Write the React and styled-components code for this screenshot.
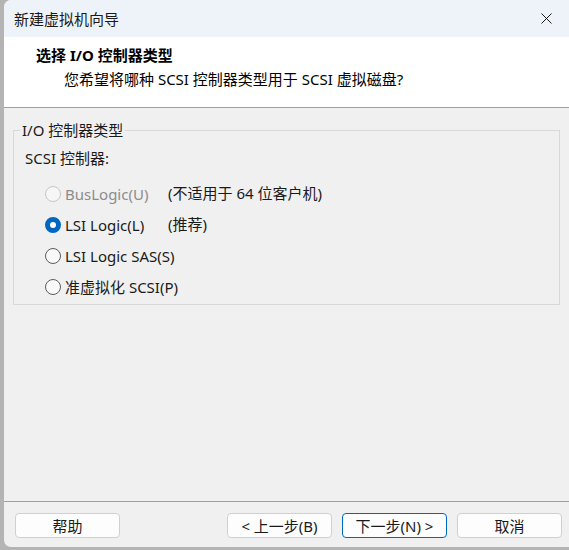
import React, { useState } from "react";
import styled, { createGlobalStyle } from "styled-components";

const GlobalStyle = createGlobalStyle`
  html, body {
    margin: 0;
    background: #b4b4b4;
  }
  * {
    box-sizing: border-box;
  }
`;

const UI_FONT = `"Noto Sans", "Noto Sans CJK SC", sans-serif`;

const Screen = styled.div`
  width: 569px;
  height: 550px;
  padding: 0 0 3px 4px;
  overflow: hidden;
`;

const Window = styled.div`
  height: 100%;
  display: flex;
  flex-direction: column;
  background: #f0f0f0;
  border-radius: 7px 0 0 7px;
  overflow: hidden;
  font-family: ${UI_FONT};
  font-size: 15px;
  color: #1a1a1a;
`;

const TitleBar = styled.div`
  height: 37px;
  flex: none;
  display: flex;
  align-items: center;
  justify-content: space-between;
  padding: 0 9px 0 10px;
  background: #eef3f9;
  font-size: 15px;
`;

const CloseButton = styled.button`
  width: 28px;
  height: 28px;
  border: 0;
  padding: 0;
  background: transparent;
  display: flex;
  align-items: center;
  justify-content: center;
`;

const Header = styled.div`
  height: 71px;
  flex: none;
  background: #ffffff;
  border-bottom: 1px solid #a0a0a0;
  padding: 8px 0 0 32px;
`;

const HeaderTitle = styled.div`
  font-weight: 700;
  font-size: 15px;
  line-height: 20px;
  color: #000;
`;

const HeaderSub = styled.div`
  margin-top: 4px;
  padding-left: 28px;
  font-size: 15px;
  line-height: 20px;
  color: #000;
`;

const Body = styled.div`
  flex: 1;
  padding: 12px 9px 0 9px;
`;

const Group = styled.fieldset`
  margin: 0;
  padding: 0 10px 2px 11px;
  border: 1px solid #d8d8d8;
  border-radius: 0;
`;

const Legend = styled.legend`
  margin-left: -5px;
  padding: 0 2px;
  line-height: 20px;
`;

const FieldLabel = styled.div`
  margin-top: 8px;
  line-height: 20px;
`;

const OptionList = styled.div`
  margin-top: 10px;
  display: grid;
  grid-template-columns: 123px auto;
  grid-auto-rows: 31px;
  padding-left: 20px;
`;

const OptionLabel = styled.label`
  display: flex;
  align-items: center;
  gap: 4px;
  white-space: nowrap;
  color: ${(p) => (p.$disabled ? "#8c8c8c" : "#1a1a1a")};
`;

const RadioDot = styled.span`
  width: 16px;
  height: 16px;
  flex: none;
  border-radius: 50%;
  border: 1px solid ${(p) => (p.$disabled ? "#c6c6c6" : "#5c5c5c")};
  background: ${(p) => (p.$disabled ? "#f6f6f6" : "#f9f9f9")};
  ${(p) =>
    p.$checked &&
    `
    border: 5px solid #0067c0;
    background: #ffffff;
  `}
`;

const Note = styled.span`
  display: flex;
  align-items: center;
  padding-bottom: 3px;
  white-space: nowrap;
`;

const Footer = styled.div`
  flex: none;
  border-top: 1px solid #a0a0a0;
  padding: 11px 7px 9px 11px;
  display: flex;
  gap: 10px;
`;

const Button = styled.button`
  width: 105px;
  height: 25px;
  padding: 0;
  font-family: ${UI_FONT};
  font-size: 15px;
  line-height: 20px;
  color: #1a1a1a;
  background: #fdfdfd;
  border: 1px solid ${(p) => (p.$primary ? "#0067c0" : "#d0d0d0")};
  border-radius: 4px;
  margin-left: ${(p) => (p.$push ? "auto" : "0")};
`;

const options = [
  { id: "bus", label: "BusLogic(U)", note: "(不适用于 64 位客户机)", disabled: true },
  { id: "lsi", label: "LSI Logic(L)", note: "(推荐)" },
  { id: "sas", label: "LSI Logic SAS(S)" },
  { id: "pv", label: "准虚拟化 SCSI(P)" },
];

export default function App() {
  const [selected, setSelected] = useState("lsi");

  return (
    <>
      <GlobalStyle />
      <Screen>
        <Window>
          <TitleBar>
            <span>新建虚拟机向导</span>
            <CloseButton aria-label="关闭">
              <svg width="11" height="11" viewBox="0 0 11 11">
                <path d="M0.5 0.5 L10.5 10.5 M10.5 0.5 L0.5 10.5" stroke="#1a1a1a" strokeWidth="1" />
              </svg>
            </CloseButton>
          </TitleBar>

          <Header>
            <HeaderTitle>选择 I/O 控制器类型</HeaderTitle>
            <HeaderSub>您希望将哪种 SCSI 控制器类型用于 SCSI 虚拟磁盘?</HeaderSub>
          </Header>

          <Body>
            <Group>
              <Legend>I/O 控制器类型</Legend>
              <FieldLabel>SCSI 控制器:</FieldLabel>
              <OptionList>
                {options.map((o) => (
                  <React.Fragment key={o.id}>
                    <OptionLabel
                      $disabled={o.disabled}
                      onClick={() => !o.disabled && setSelected(o.id)}
                    >
                      <RadioDot $disabled={o.disabled} $checked={selected === o.id} />
                      {o.label}
                    </OptionLabel>
                    <Note>{o.note || ""}</Note>
                  </React.Fragment>
                ))}
              </OptionList>
            </Group>
          </Body>

          <Footer>
            <Button>帮助</Button>
            <Button $push>&lt; 上一步(B)</Button>
            <Button $primary>下一步(N) &gt;</Button>
            <Button>取消</Button>
          </Footer>
        </Window>
      </Screen>
    </>
  );
}
